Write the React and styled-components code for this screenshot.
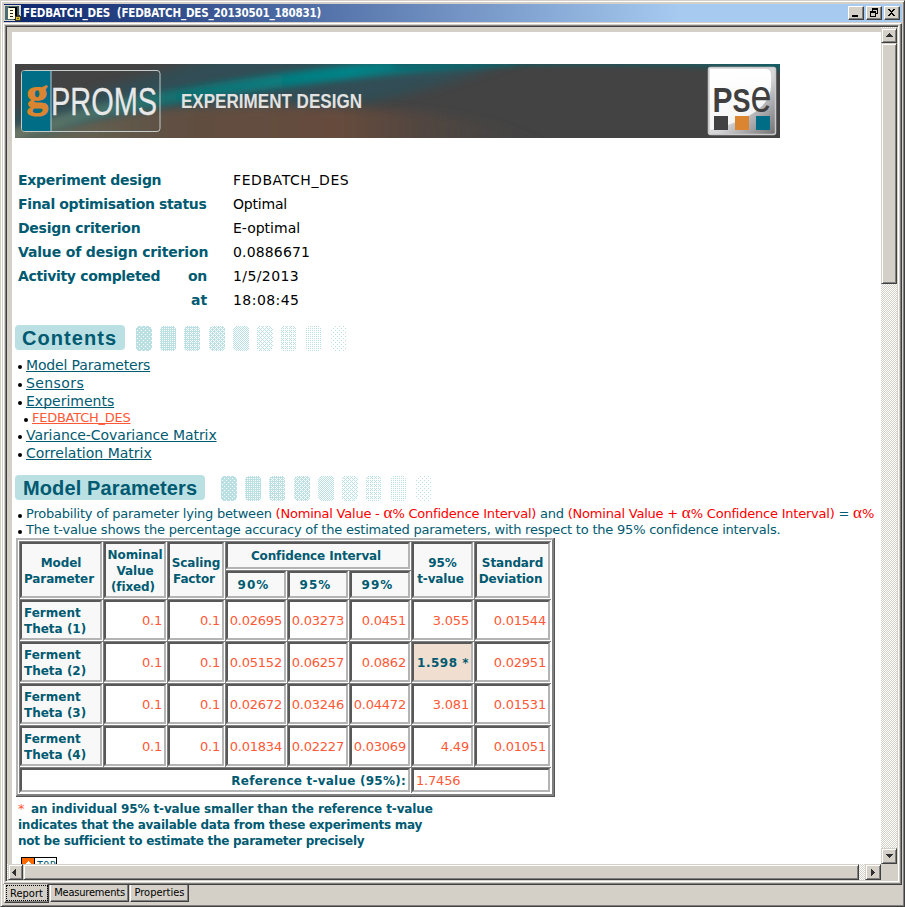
import React from "react";
import styled, { createGlobalStyle, css } from "styled-components";

const face = "#d4d0c8";
const teal = "#005a71";
const coral = "#ff5836";
const pale = "#bbe0e3";
const verdana = `Verdana, "DejaVu Sans", sans-serif`;
const tahoma = `Tahoma, "DejaVu Sans Condensed", "DejaVu Sans", sans-serif`;

const Global = createGlobalStyle`
  * { box-sizing: border-box; }
  html, body { margin: 0; padding: 0; overflow: hidden; }
  body { background: ${face}; }
`;

const raised = css`
  border: 1px solid;
  border-color: ${face} #404040 #404040 ${face};
  box-shadow: inset 1px 1px 0 #fff, inset -1px -1px 0 #808080;
  background: ${face};
`;

const Window = styled.div`
  width: 905px;
  height: 907px;
  padding: 3px 2px 3px 2px;
  display: flex;
  flex-direction: column;
  ${raised}
`;

const TitleBar = styled.header`
  height: 18px;
  flex: none;
  margin: 0 0 1px 1px;
  display: flex;
  align-items: center;
  background: linear-gradient(90deg, #0a246a 0, #a6caf0 676px);
`;

const Title = styled.h1`
  flex: 1;
  margin: 0;
  padding-left: 2px;
  font: bold 11.5px/16px ${tahoma};
  font-stretch: condensed;
  letter-spacing: -0.19px;
  color: #fff;
  white-space: pre;
`;

const CaptionButton = styled.button`
  width: 16px;
  height: 14px;
  padding: 0;
  margin-right: 2px;
  display: grid;
  place-items: center;
  ${raised}
  border-color: #fff #404040 #404040 #fff;
  box-shadow: inset -1px -1px 0 #808080;
  svg { display: block; }
`;

const Panel = styled.section`
  height: 862px;
  flex: none;
  padding: 1px;
  border: 1px solid;
  border-color: #fff #404040 #404040 #fff;
  box-shadow: inset -1px -1px 0 #808080;
`;

const ScrollPane = styled.div`
  width: 894px;
  height: 857px;
  border: 1px solid;
  border-color: #808080 #fff #fff #808080;
  box-shadow: inset 1px 1px 0 #404040;
  padding: 1px;
  display: grid;
  grid-template-columns: 874px 16px;
  grid-template-rows: 837px 16px;
`;

const Viewport = styled.main`
  padding: 5px 0 0 5px;
  overflow: hidden;
`;

const Report = styled.article`
  width: 869px;
  height: 832px;
  overflow: hidden;
  padding: 32px 0 0 3px;
  background: #fff;
  font-family: ${verdana};
  color: ${teal};
`;

const Track = styled.div`
  display: flex;
  flex-direction: ${(p) => (p.$horizontal ? "row" : "column")};
  padding: ${(p) => (p.$horizontal ? "0 0 0 1px" : "1px 0 0")};
  background: repeating-conic-gradient(${face} 0 25%, #fff 0 50%) 0 0 / 2px 2px;
`;

const ScrollButton = styled.button`
  flex: none;
  padding: 0;
  width: ${(p) => p.$w}px;
  height: ${(p) => p.$h}px;
  display: grid;
  place-items: center;
  ${raised}
  svg { display: block; }
`;

const Thumb = styled.div`
  flex: none;
  width: ${(p) => p.$w}px;
  height: ${(p) => p.$h}px;
  margin: ${(p) => p.$margin};
  ${raised}
`;

const Banner = styled.svg`
  display: block;
  width: 765px;
  height: 74px;
`;

const Summary = styled.dl`
  margin: 30px 0 0 3px;
  display: grid;
  grid-template-columns: 215px 1fr;
  grid-auto-rows: 24px;
  font-size: 14px;
  line-height: 24px;
`;

const Term = styled.dt`
  width: 189px;
  display: flex;
  justify-content: space-between;
  font-weight: bold;
  letter-spacing: ${(p) => p.$ls || 0}px;
  white-space: pre;
`;

const Value = styled.dd`
  margin: 0;
  color: #000;
  letter-spacing: ${(p) => p.$ls || 0}px;
`;

const SectionHead = styled.div`
  margin-top: ${(p) => p.$top}px;
  height: 26px;
  display: flex;
  gap: ${(p) => p.$gap}px;
`;

const SectionTitle = styled.h2`
  margin: 0;
  width: ${(p) => p.$w}px;
  height: 25px;
  padding-left: ${(p) => p.$inset}px;
  border-radius: 4px;
  background: ${pale};
  color: ${teal};
  font: bold 20px/26px Arial, "Liberation Sans", sans-serif;
  letter-spacing: ${(p) => p.$ls}px;
  white-space: nowrap;
`;

const Dots = styled.svg`
  display: block;
  flex: none;
  width: 212px;
  height: 26px;
  margin-top: 1px;
`;

const List = styled.ul`
  list-style: none;
  margin: ${(p) => p.$margin || 0};
  padding: 0;
`;

const Item = styled.li`
  display: flex;
  align-items: center;
  height: ${(p) => (p.$small ? 16 : 18)}px;
  padding-left: ${(p) => (p.$nested ? 9 : 3)}px;
  font-size: ${(p) => (p.$small ? 13 : 14)}px;
  line-height: ${(p) => (p.$small ? 16 : 18)}px;
  letter-spacing: ${(p) => p.$ls || 0}px;
  white-space: pre;

  &::before {
    content: "";
    flex: none;
    width: 4px;
    height: 4px;
    margin: ${(p) => (p.$small ? "3px" : "4px")} 4px 0 0;
    border-radius: 2px;
    background: #000;
  }
`;

const Link = styled.a`
  color: ${(p) => (p.$hot ? coral : teal)};
  text-decoration: underline;
  text-decoration-thickness: 1px;
  text-underline-offset: 1px;
  text-decoration-skip-ink: none;
`;

const Red = styled.span`
  color: #f00;
`;

const Alpha = styled.i`
  font: normal 17px/10px "Liberation Serif", serif;
  letter-spacing: 0;
`;

const TableFrame = styled.div`
  width: 539px;
  margin-left: 1px;
  border: solid #555;
  border-width: 0 1px 1px 0;
`;

const Table = styled.div`
  padding: 1px;
  border: 2px solid;
  border-color: #b4b4b4 #808080 #808080 #b4b4b4;
  display: grid;
  grid-template-columns: 84px 64px 58px 62px 62px 62px 63px 77px;
  grid-template-rows: 29px 29px repeat(4, 42px) 26px;
`;

const Cell = styled.div`
  grid-column: ${(p) => p.$col || "auto"};
  grid-row: ${(p) => p.$row || "auto"};
  border: solid;
  border-width: 1px 0 0 1px;
  border-color: #808080;
  padding: 0 1px 1px 0;
  display: flex;
`;

const CellBody = styled.div`
  flex: 1;
  min-width: 0;
  border: 2px solid;
  border-color: #585858 #b4b4b4 #b4b4b4 #585858;
  padding: ${(p) => (p.$flat ? 0 : 2)}px 2px 0;
  display: flex;
  align-items: center;
  justify-content: ${(p) => p.$align || "flex-end"};
  text-align: ${(p) => (p.$align === "center" ? "center" : "left")};
  background: ${(p) => p.$bg || "#fff"};
  color: ${(p) => (p.$head ? teal : coral)};
  font-size: ${(p) => (p.$head ? 12 : 13)}px;
  line-height: 16px;
  font-weight: ${(p) => (p.$head ? "bold" : "normal")};
  letter-spacing: ${(p) => p.$ls ?? -0.2}px;
  white-space: pre;
`;

const Footnote = styled.p`
  margin: 4px 0 0 3px;
  font-size: 12px;
  line-height: 16px;
  font-weight: bold;
  white-space: pre;
`;

const NoteLine = styled.span`
  display: block;
  height: 16px;
  letter-spacing: ${(p) => p.$ls}px;
`;

const Star = styled.span`
  display: inline-block;
  width: 9px;
  color: ${coral};
  font-size: 13px;
  font-weight: normal;
`;

const TopLink = styled.a`
  margin: 8px 0 0 6px;
  width: 36px;
  height: 16px;
  border: 1px solid #000;
  display: flex;
  background: #fff;
  color: ${teal};
  font: 10px/16px "DejaVu Sans Mono", monospace;
  letter-spacing: 0.3px;
`;

const TopArrow = styled.span`
  width: 13px;
  margin-right: 2px;
  border-right: 1px solid #000;
  background: #ff6a00;
  svg { display: block; }
`;

const Tabs = styled.nav`
  display: flex;
  align-items: flex-start;
  padding-left: 1px;
`;

const Tab = styled.button`
  width: ${(p) => p.$w}px;
  height: ${(p) => (p.$active ? 19 : 17)}px;
  margin: ${(p) => (p.$active ? "-1px 1px 0 0" : "0 1px 0 0")};
  padding: ${(p) => (p.$active ? 0 : "1px 0 0")};
  border: solid;
  border-width: 0 1px 1px 1px;
  border-color: #404040 #404040 #404040 #fff;
  box-shadow: inset -1px -1px 0 #808080;
  background: ${face};
  color: #000;
  font: 11px/14px ${tahoma};
  font-stretch: condensed;
  letter-spacing: ${(p) => p.$ls || 0}px;
  display: flex;
  justify-content: center;
  align-items: ${(p) => (p.$active ? "center" : "flex-start")};
`;

const FocusRing = styled.span`
  width: 42px;
  height: 16px;
  border: 1px dotted #000;
  line-height: 16px;
`;

const DocumentIcon = () => (
  <svg width="17" height="17" viewBox="0 0 17 17" shapeRendering="crispEdges">
    <rect width="17" height="16" fill="#ded9d0" />
    <rect x="1" y="1" width="12" height="14" fill="#4b6c70" />
    <path d="M5 2h8v13h-3V4H5z" fill="#000" />
    <path d="M4 3h7v11H4z" fill="#fffce0" />
    <path d="M6 5h3v1H6zM6 8h3v1H6zM6 11h3v1H6z" fill="#222" />
    <path d="M13 1h2v10h-2z" fill="#35555a" />
    <path d="M12 11h1v-1h3v1h1v5h-6v-5z" fill="#3b3b22" />
    <path d="M12 12h4v3h-4z" fill="#d7bd35" />
    <path d="M13 13h2v1h-2z" fill="#6d6119" />
  </svg>
);

const Arrow = ({ dir }) => {
  const paths = {
    up: "M3 1h1v1h1v1h1v1h1v1H0V4h1V3h1V2h1z",
    down: "M0 1h7v1H6v1H5v1H4v1H3V4H2V3H1V2H0z",
    left: "M4 0v7H3V6H2V5H1V4H0V3h1V2h1V1h1V0z",
    right: "M1 0v7h1V6h1V5h1V4h1V3H4V2H3V1H2V0z",
  };
  return (
    <svg width="7" height="7" viewBox="0 0 7 7" shapeRendering="crispEdges">
      <path d={paths[dir]} fill="#303030" />
    </svg>
  );
};

const captionGlyphs = {
  Minimize: "M1 7h6v2H1z",
  Restore: "M3 0h6v6H7V5h1V2H4v1H3zM1 3h6v6H1zM2 5v3h4V5z",
  Close: "M1 1h2v1h1v1h1V2h1V1h2v1H7v1H6v1H5v1h1v1h1v1h1v1H6V7H5V6H4v1H3v1H1V7h1V6h1V5h1V4H3V3H2V2H1z",
};

const Caption = ({ name }) => (
  <CaptionButton aria-label={name}>
    <svg width="10" height="10" viewBox="0 0 10 10" shapeRendering="crispEdges">
      <path d={captionGlyphs[name]} fillRule="evenodd" fill="#000" />
    </svg>
  </CaptionButton>
);

/* Each tile lists the cells painted in a 4x4 dither matrix. */
const tiles = [
  ["1011", "1111", "1110", "1111"],
  ["0101", "1111", "0101", "1111"],
  ["0101", "1111", "0101", "1110"],
  ["0101", "1110", "0101", "1011"],
  ["0101", "1010", "0101", "1010"],
  ["1010", "0100", "1010", "0001"],
  ["1010", "0100", "1010", "0000"],
  ["1010", "0000", "1010", "0000"],
  ["0100", "0000", "0001", "0000"],
];
const tileX = [0, 24, 48, 73, 97, 121, 145, 170, 194];
const blockW = 16;
const blockH = 25;

const inBlock = (x, y) => {
  const dx = Math.min(x, blockW - 1 - x);
  const dy = Math.min(y, blockH - 1 - y);
  return dx + dy >= 2;
};

const trailPath = tileX
  .map((left, i) => {
    let d = "";
    for (let y = 0; y < blockH; y++) {
      for (let x = 0; x < blockW; x++) {
        if (tiles[i][y % 4][x % 4] === "1" && inBlock(x, y)) d += `M${left + x} ${y}h1v1h-1z`;
      }
    }
    return d;
  })
  .join("");

const DitherTrail = () => (
  <Dots viewBox="0 0 212 26" shapeRendering="crispEdges">
    <path d={trailPath} fill={pale} />
  </Dots>
);

const HeaderBanner = () => (
  <Banner viewBox="0 0 765 74">
    <defs>
      <filter id="soft" x="-20%" y="-50%" width="140%" height="200%">
        <feGaussianBlur stdDeviation="7 5" />
      </filter>
      <filter id="fine" x="-20%" y="-50%" width="140%" height="200%">
        <feGaussianBlur stdDeviation="5 3" />
      </filter>
      <linearGradient id="streak" gradientUnits="userSpaceOnUse" x1="0" y1="0" x2="480" y2="0">
        <stop offset="0" stopColor="#6b7463" />
        <stop offset=".2" stopColor="#3f6f69" />
        <stop offset=".35" stopColor="#0d7071" />
        <stop offset=".7" stopColor="#028488" />
        <stop offset="1" stopColor="#067c80" stopOpacity=".4" />
      </linearGradient>
      <linearGradient id="glow" x1="0" x2="1">
        <stop offset="0" stopColor="#66705f" />
        <stop offset=".3" stopColor="#604f42" />
        <stop offset=".6" stopColor="#664b3c" />
        <stop offset="1" stopColor="#454343" stopOpacity="0" />
      </linearGradient>
      <linearGradient id="badge" x1="0" y1="0" x2="1" y2="1">
        <stop offset="0" stopColor="#e9e9ea" />
        <stop offset=".55" stopColor="#d6d6d8" />
        <stop offset="1" stopColor="#707073" />
      </linearGradient>
      <linearGradient id="gloss" x1="0" y1="0" x2="0" y2="1">
        <stop offset="0" stopColor="#fff" />
        <stop offset="1" stopColor="#fff" stopOpacity=".75" />
      </linearGradient>
      <clipPath id="bannerClip"><rect width="765" height="74" /></clipPath>
    </defs>
    <g clipPath="url(#bannerClip)">
      <rect width="765" height="74" fill="#434343" />
      <path d="M-10 50C80 30 140 8 220 -12H520C440 20 350 48 200 60L-10 84z" fill="#304d54" filter="url(#soft)" />
      <path d="M-10 84C100 36 200 38 340 44S480 66 550 84z" fill="url(#glow)" filter="url(#soft)" />
      <path d="M-10 74C50 56 90 44 145 35S240 19 325 9S430 0 500 -6" fill="none" stroke="url(#streak)" strokeWidth="14" filter="url(#fine)" />
      <path d="M380 -6H780V6C640 -2 520 -2 380 4z" fill="#116069" filter="url(#fine)" />
    </g>
    <rect x="6.5" y="6.5" width="138.500" height="61" rx="3" fill="none" stroke="#c3cbcb" />
    <path d="M9 7h27v60H9q-2 0-2-2V9q0-2 2-2z" fill="#006d87" />
    <path d="M36 7v60" stroke="#b8c8ca" />
    <text x="11.500" y="43" textLength="21.500" lengthAdjust="spacingAndGlyphs" fontFamily="Liberation Serif" fontWeight="bold" fontSize="43" fill="#dc8530" stroke="#dc8530" strokeWidth="1.200">g</text>
    <text x="36" y="51" textLength="106" lengthAdjust="spacingAndGlyphs" fontFamily="Liberation Sans" fontSize="38.500" fill="#e8e8e8" stroke="#e8e8e8" strokeWidth=".3">PROMS</text>
    <text x="166" y="44" textLength="181" lengthAdjust="spacingAndGlyphs" fontFamily="Liberation Sans" fontWeight="bold" fontSize="20" fill="#e4e2e0">EXPERIMENT DESIGN</text>
    <rect x="693.500" y="3.500" width="67" height="67" rx="2" fill="url(#badge)" stroke="#c9c9cb" strokeWidth="1.500" />
    <path d="M695 5h56q5 0 5 6v10c0 18-16 34-61 45z" fill="url(#gloss)" />
    <text x="697.500" y="47.500" textLength="20" lengthAdjust="spacingAndGlyphs" fontFamily="Liberation Sans" fontWeight="bold" fontSize="35" fill="#3f3f40">P</text>
    <text x="717.500" y="47.500" textLength="18" lengthAdjust="spacingAndGlyphs" fontFamily="Liberation Sans" fontWeight="bold" fontSize="34" fill="#3f3f40">S</text>
    <text x="735.500" y="48" textLength="21" lengthAdjust="spacingAndGlyphs" fontFamily="Liberation Sans" fontSize="46" fill="#3f3f40">e</text>
    <rect x="699" y="52" width="14" height="14" fill="#414142" />
    <rect x="720" y="52" width="14" height="14" fill="#dc8530" />
    <rect x="741" y="52" width="14" height="14" fill="#006d87" />
  </Banner>
);

const summary = [
  { label: "Experiment design", ls: -0.28, value: "FEDBATCH_DES", vls: 0.58 },
  { label: "Final optimisation status", ls: -0.35, value: "Optimal", vls: -0.2 },
  { label: "Design criterion", ls: -0.26, value: "E-optimal", vls: 0 },
  { label: "Value of design criterion", ls: -0.16, value: "0.0886671", vls: 0.15 },
  { label: "Activity completed", suffix: "on", ls: -0.34, value: "1/5/2013", vls: 0.4 },
  { label: "", suffix: "at", ls: -0.1, value: "18:08:45", vls: 0.45 },
];

const rows = [
  ["Ferment\nTheta (1)", "0.1", "0.1", "0.02695", "0.03273", "0.0451", "3.055", "0.01544"],
  ["Ferment\nTheta (2)", "0.1", "0.1", "0.05152", "0.06257", "0.0862", "1.598 *", "0.02951"],
  ["Ferment\nTheta (3)", "0.1", "0.1", "0.02672", "0.03246", "0.04472", "3.081", "0.01531"],
  ["Ferment\nTheta (4)", "0.1", "0.1", "0.01834", "0.02227", "0.03069", "4.49", "0.01051"],
];

const HeadCell = ({ col, row, flat, ls = -0.12, children }) => (
  <Cell $col={col} $row={row}>
    <CellBody $head $align="center" $bg="#f8f8f8" $flat={flat} $ls={ls}>{children}</CellBody>
  </Cell>
);

const ResultsTable = () => (
  <TableFrame>
    <Table>
      <HeadCell col="1" row="1 / 3">{"Model\nParameter "}</HeadCell>
      <HeadCell col="2" row="1 / 3">{"Nominal\nValue\n(fixed) "}</HeadCell>
      <HeadCell col="3" row="1 / 3">{"Scaling\nFactor "}</HeadCell>
      <HeadCell col="4 / 7" row="1" flat>{"Confidence Interval "}</HeadCell>
      <HeadCell col="4" row="2" flat ls={1}>{"90% "}</HeadCell>
      <HeadCell col="5" row="2" flat ls={1}>{"95% "}</HeadCell>
      <HeadCell col="6" row="2" flat ls={1}>{"99% "}</HeadCell>
      <HeadCell col="7" row="1 / 3">{"95%\nt-value "}</HeadCell>
      <HeadCell col="8" row="1 / 3">{"Standard\nDeviation "}</HeadCell>
      {rows.flatMap((row, r) =>
        row.map((text, c) => {
          const flagged = text.endsWith("*");
          return (
            <Cell key={`${r}-${c}`}>
              <CellBody
                $head={c === 0 || flagged}
                $align={c === 0 ? "flex-start" : "flex-end"}
                $bg={c === 0 ? "#f8f8f8" : flagged ? "#f0dfd0" : "#fff"}
                $ls={flagged ? 0.5 : c === 0 ? 0 : -0.2}
              >
                {text}
              </CellBody>
            </Cell>
          );
        })
      )}
      <Cell $col="1 / 7">
        <CellBody $head $ls={0.24}>Reference t-value (95%):</CellBody>
      </Cell>
      <Cell $col="7 / 9">
        <CellBody $align="flex-start">1.7456</CellBody>
      </Cell>
    </Table>
  </TableFrame>
);

export default function App() {
  return (
    <Window>
      <Global />
      <TitleBar>
        <DocumentIcon />
        <Title>{"FEDBATCH_DES  (FEDBATCH_DES_20130501_180831)"}</Title>
        <Caption name="Minimize" />
        <Caption name="Restore" />
        <Caption name="Close" />
      </TitleBar>
      <Panel>
        <ScrollPane>
          <Viewport>
            <Report>
              <HeaderBanner />
              <Summary>
                {summary.map(({ label, suffix, ls, value, vls }) => (
                  <React.Fragment key={value}>
                    <Term $ls={ls}><span>{label}</span><span>{suffix}</span></Term>
                    <Value $ls={vls}>{value}</Value>
                  </React.Fragment>
                ))}
              </Summary>
              <SectionHead $top={13} $gap={11}>
                <SectionTitle $w={110} $inset={7} $ls={1.05}>Contents</SectionTitle>
                <DitherTrail />
              </SectionHead>
              <List $margin="5px 0 0">
                <Item $ls={-0.15}><Link>Model Parameters</Link></Item>
                <Item $ls={0.4}><Link>Sensors</Link></Item>
                <Item><Link>Experiments</Link></Item>
                <Item $small $nested $ls={-0.25}><Link $hot>FEDBATCH_DES</Link></Item>
                <Item $ls={-0.08}><Link>Variance-Covariance Matrix</Link></Item>
                <Item><Link>Correlation Matrix</Link></Item>
              </List>
              <SectionHead $top={13} $gap={16}>
                <SectionTitle $w={190} $inset={8} $ls={0.12}>Model Parameters</SectionTitle>
                <DitherTrail />
              </SectionHead>
              <List $margin="5px 0 0">
                <Item $small $ls={-0.22}>
                  <span>
                    {"Probability of parameter lying between "}
                    <Red>(Nominal Value - <Alpha>α</Alpha>% Confidence Interval)</Red>
                    {" and "}
                    <Red>(Nominal Value + <Alpha>α</Alpha>% Confidence Interval)</Red>
                    {" = "}
                    <Red><Alpha>α</Alpha>%</Red>
                  </span>
                </Item>
                <Item $small $ls={-0.214}>
                  The t-value shows the percentage accuracy of the estimated parameters, with respect to the 95% confidence intervals.
                </Item>
              </List>
              <ResultsTable />
              <Footnote>
                <NoteLine $ls={-0.12}><Star>*</Star> an individual 95% t-value smaller than the reference t-value</NoteLine>
                <NoteLine $ls={-0.26}>indicates that the available data from these experiments may</NoteLine>
                <NoteLine $ls={-0.27}>not be sufficient to estimate the parameter precisely</NoteLine>
              </Footnote>
              <TopLink>
                <TopArrow>
                  <svg width="12" height="14" viewBox="0 0 12 14" shapeRendering="crispEdges">
                    <path d="M6 3h1v1h1v1h1v1h1v1H8v4H5V7H3V6h1V5h1V4h1z" fill="#fff" />
                  </svg>
                </TopArrow>
                TOP
              </TopLink>
            </Report>
          </Viewport>
          <Track>
            <ScrollButton $w={16} $h={15}><Arrow dir="up" /></ScrollButton>
            <Thumb $w={16} $h={241} $margin="0 0 auto" />
            <ScrollButton $w={16} $h={16}><Arrow dir="down" /></ScrollButton>
          </Track>
          <Track $horizontal>
            <ScrollButton $w={15} $h={16}><Arrow dir="left" /></ScrollButton>
            <Thumb $w={836} $h={16} $margin="0 auto 0 0" />
            <ScrollButton $w={16} $h={16}><Arrow dir="right" /></ScrollButton>
          </Track>
        </ScrollPane>
      </Panel>
      <Tabs>
        <Tab $w={45} $active><FocusRing>Report</FocusRing></Tab>
        <Tab $w={79} $ls={-0.2}>Measurements</Tab>
        <Tab $w={59}>Properties</Tab>
      </Tabs>
    </Window>
  );
}
